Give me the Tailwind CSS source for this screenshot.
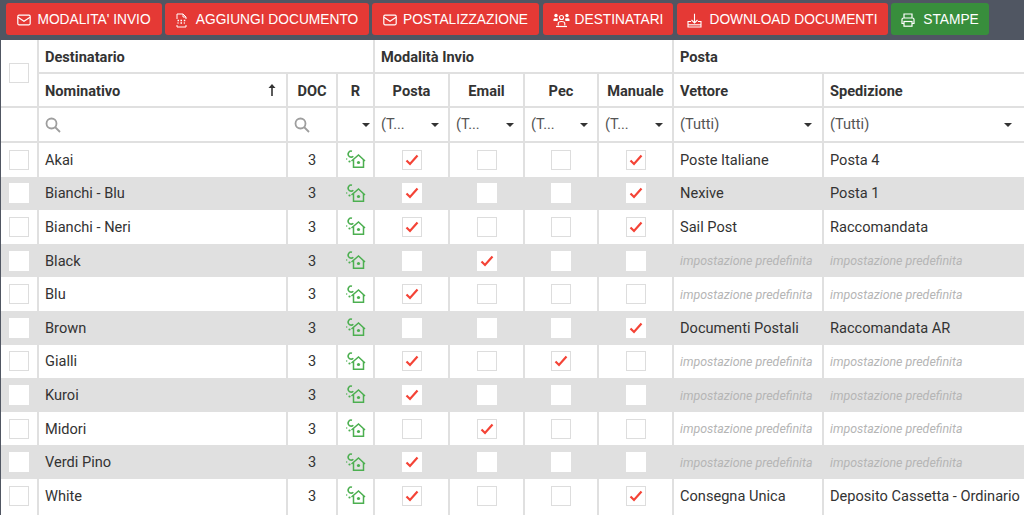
<!DOCTYPE html>
<html lang="it">
<head>
  <meta charset="UTF-8" />
  <title>Destinatari</title>
  <script src="https://cdn.jsdelivr.net/npm/@tailwindcss/browser@4"></script>
</head>
<body class="h-[515px] w-[1024px] overflow-hidden bg-white font-['Roboto',sans-serif] text-[14.6px] text-[#333]">

  <!-- Toolbar -->
  <div class="flex h-[40px] items-start gap-[3px] bg-[#505662] pl-[6px] pt-[3px] font-['Liberation_Sans',sans-serif] text-[13.75px] text-white">
    <button class="flex h-[32px] w-[156px] items-center justify-center gap-[6px] rounded-[3px] bg-[#e53935] pt-[2px]">
      <svg class="h-[14px] w-[14px]" viewBox="0 0 14 14" fill="none" stroke="currentColor" stroke-width="1.2"><rect x="0.8" y="2.2" width="12.4" height="9.6" rx="1.2"/><path d="M1 4.2l6 4 6-4"/></svg>
      MODALITA' INVIO
    </button>
    <button class="flex h-[32px] w-[204px] items-center justify-center gap-[9px] rounded-[3px] bg-[#e53935] pt-[2px]">
      <svg class="h-[15px] w-[11px]" viewBox="0 0 11 15" fill="none" stroke="currentColor" stroke-width="1"><path d="M1 6V1h6l3 3v2M1 12v2h9v-2M7 1v3h3"/><path d="M1.500 7.500h1.500M4.500 7.500h1.500M7.800 7.500h1.500M1.500 10h1M4.500 10h1.500M7.800 10h1" stroke-width="1.400"/></svg>
      AGGIUNGI DOCUMENTO
    </button>
    <button class="flex h-[32px] w-[167px] items-center justify-center gap-[6px] rounded-[3px] bg-[#e53935] pt-[2px]">
      <svg class="h-[14px] w-[14px]" viewBox="0 0 14 14" fill="none" stroke="currentColor" stroke-width="1.2"><rect x="0.8" y="2.2" width="12.4" height="9.6" rx="1.2"/><path d="M1 4.2l6 4 6-4"/></svg>
      POSTALIZZAZIONE
    </button>
    <button class="ml-[1px] flex h-[32px] w-[130px] items-center justify-center gap-[5px] rounded-[3px] bg-[#e53935] pt-[2px]">
      <svg class="h-[15px] w-[17px]" viewBox="0 0 17 15" fill="none" stroke="currentColor"><circle cx="8.500" cy="4.500" r="2" stroke-width="1.100"/><circle cx="3" cy="2.500" r="1.700" fill="currentColor" stroke="none"/><circle cx="14" cy="2.500" r="1.700" fill="currentColor" stroke="none"/><path d="M.5 8V6.500c0-1 1-1.300 2.500-1.300 1 0 1.700.2 2.100.6-.3.600-.5 1.300-.6 2.200zM16.500 8V6.500c0-1-1-1.300-2.500-1.300-1 0-1.700.2-2.100.6.3.600.5 1.300.6 2.200z" fill="currentColor" stroke="none"/><path d="M5.200 12.500v-2c0-1.300 1.400-2 3.300-2s3.300.7 3.300 2v2" stroke-width="1.100"/><path d="M3 13.500h11" stroke-width="1.200"/></svg>
      DESTINATARI
    </button>
    <button class="ml-[1px] flex h-[32px] w-[211px] items-center justify-center gap-[7px] rounded-[3px] bg-[#e53935] pt-[2px]">
      <svg class="h-[15px] w-[15px]" viewBox="0 0 15 15" fill="none" stroke="currentColor" stroke-width="1.100"><path d="M7.500 .8v9M4.500 7l3 3 3-3"/><path d="M4 8.500H1v5.500h13V8.500h-3"/><path d="M1 11.800h13"/></svg>
      DOWNLOAD DOCUMENTI
    </button>
    <button class="flex h-[32px] w-[98px] items-center justify-center gap-[8px] rounded-[3px] bg-[#388e3c] pt-[2px]">
      <svg class="h-[14px] w-[14px]" viewBox="0 0 14 14" fill="none" stroke="currentColor" stroke-width="1.200"><path d="M3 5V1h8v4M3 10.500H1V6.500A1.500 1.500 0 0 1 2.500 5h9A1.500 1.500 0 0 1 13 6.500v4h-2"/><rect x="3" y="8.500" width="8" height="4.700"/></svg>
      STAMPE
    </button>
  </div>

  <!-- Griglia -->
  <div class="border-l border-l-[#505662]">
    <!-- Intestazione -->
    <div class="grid h-[68px] grid-cols-[38px_249px_50px_37px_75px_75px_74px_75px_150px_200px] grid-rows-[34px_32px] border-b-2 border-[#e0e0e0] font-bold">
      <div class="row-span-2 flex items-center justify-center border-r-2 border-[#e0e0e0]">
        <span class="h-[20px] w-[20px] border border-[#ddd] bg-white"></span>
      </div>
      <div class="col-span-3 flex items-center border-b-2 border-r-2 border-[#e0e0e0] pl-[6px] pt-[3px]">Destinatario</div>
      <div class="col-span-4 flex items-center border-b-2 border-r-2 border-[#e0e0e0] pl-[6px] pt-[3px]">Modalità Invio</div>
      <div class="col-span-2 flex items-center border-b-2 border-[#e0e0e0] pl-[6px] pt-[3px]">Posta</div>
      <div class="flex items-center justify-between border-r-2 border-[#e0e0e0] pl-[6px] pr-[9px] pt-[3px]">
        Nominativo
        <svg class="mb-[3px] h-[14px] w-[10px]" viewBox="0 0 10 14" fill="#333"><path d="M5 1L1.500 5h2.700v8h1.600V5h2.700z"/></svg>
      </div>
      <div class="flex items-center justify-center border-r-2 border-[#e0e0e0] pt-[3px]">DOC</div>
      <div class="flex items-center justify-center border-r-2 border-[#e0e0e0] pt-[3px]">R</div>
      <div class="flex items-center justify-center border-r-2 border-[#e0e0e0] pt-[3px]">Posta</div>
      <div class="flex items-center justify-center border-r-2 border-[#e0e0e0] pt-[3px]">Email</div>
      <div class="flex items-center justify-center border-r-2 border-[#e0e0e0] pt-[3px]">Pec</div>
      <div class="flex items-center justify-center border-r-2 border-[#e0e0e0] pt-[3px]">Manuale</div>
      <div class="flex items-center border-r-2 border-[#e0e0e0] pl-[6px] pt-[3px]">Vettore</div>
      <div class="flex items-center pl-[6px] pt-[3px]">Spedizione</div>
    </div>

    <!-- Filtri -->
    <div class="grid h-[35px] grid-cols-[38px_249px_50px_37px_75px_75px_74px_75px_150px_200px] border-b-2 border-[#e0e0e0] text-[#555]">
      <div class="border-r-2 border-[#e0e0e0]"></div>
      <div class="flex items-center border-r-2 border-[#e0e0e0] pl-[6px]">
        <svg class="h-[16px] w-[16px]" viewBox="0 0 16 16" fill="none" stroke="#9e9e9e" stroke-width="1.800"><circle cx="6.500" cy="6.500" r="5"/><path d="M10 10l5 5"/></svg>
      </div>
      <div class="flex items-center border-r-2 border-[#e0e0e0] pl-[6px]">
        <svg class="h-[16px] w-[16px]" viewBox="0 0 16 16" fill="none" stroke="#9e9e9e" stroke-width="1.800"><circle cx="6.500" cy="6.500" r="5"/><path d="M10 10l5 5"/></svg>
      </div>
      <div class="flex items-center justify-end border-r-2 border-[#e0e0e0] pr-[3px]">
        <span class="h-0 w-0 border-x-[4px] border-t-[4px] border-x-transparent border-t-[#333]"></span>
      </div>
      <div class="flex items-center justify-between border-r-2 border-[#e0e0e0] pl-[6px] pr-[9px]">(T...<span class="h-0 w-0 border-x-[4px] border-t-[4px] border-x-transparent border-t-[#333]"></span></div>
      <div class="flex items-center justify-between border-r-2 border-[#e0e0e0] pl-[6px] pr-[9px]">(T...<span class="h-0 w-0 border-x-[4px] border-t-[4px] border-x-transparent border-t-[#333]"></span></div>
      <div class="flex items-center justify-between border-r-2 border-[#e0e0e0] pl-[6px] pr-[9px]">(T...<span class="h-0 w-0 border-x-[4px] border-t-[4px] border-x-transparent border-t-[#333]"></span></div>
      <div class="flex items-center justify-between border-r-2 border-[#e0e0e0] pl-[6px] pr-[9px]">(T...<span class="h-0 w-0 border-x-[4px] border-t-[4px] border-x-transparent border-t-[#333]"></span></div>
      <div class="flex items-center justify-between border-r-2 border-[#e0e0e0] pl-[6px] pr-[10px]">(Tutti)<span class="h-0 w-0 border-x-[4px] border-t-[4px] border-x-transparent border-t-[#333]"></span></div>
      <div class="flex items-center justify-between pl-[6px] pr-[12px]">(Tutti)<span class="h-0 w-0 border-x-[4px] border-t-[4px] border-x-transparent border-t-[#333]"></span></div>
    </div>

    <div id="righe"></div>

    <!-- Inizio della riga successiva, tagliata dal bordo -->
    <div class="grid h-[3px] grid-cols-[38px_249px_50px_37px_75px_75px_74px_75px_150px_200px]">
      <div class="border-r-2 border-[#e0e0e0]"></div>
      <div class="border-r-2 border-[#e0e0e0]"></div>
      <div class="border-r-2 border-[#e0e0e0]"></div>
      <div class="border-r-2 border-[#e0e0e0]"></div>
      <div class="border-r-2 border-[#e0e0e0]"></div>
      <div class="border-r-2 border-[#e0e0e0]"></div>
      <div class="border-r-2 border-[#e0e0e0]"></div>
      <div class="border-r-2 border-[#e0e0e0]"></div>
      <div class="border-r-2 border-[#e0e0e0]"></div>
    </div>
  </div>

  <script>
    // nome, posta, email, pec, manuale, vettore, spedizione
    const righe = [
      ["Akai", 1, 0, 0, 1, "Poste Italiane", "Posta 4"],
      ["Bianchi - Blu", 1, 0, 0, 1, "Nexive", "Posta 1"],
      ["Bianchi - Neri", 1, 0, 0, 1, "Sail Post", "Raccomandata"],
      ["Black", 0, 1, 0, 0, "", ""],
      ["Blu", 1, 0, 0, 0, "", ""],
      ["Brown", 0, 0, 0, 1, "Documenti Postali", "Raccomandata AR"],
      ["Gialli", 1, 0, 1, 0, "", ""],
      ["Kuroi", 1, 0, 0, 0, "", ""],
      ["Midori", 0, 1, 0, 0, "", ""],
      ["Verdi Pino", 1, 0, 0, 0, "", ""],
      ["White", 1, 0, 0, 1, "Consegna Unica", "Deposito Cassetta - Ordinario"],
    ];

    const spunta = `<svg class="h-[12px] w-[14px]" viewBox="0 0 14 12" fill="none" stroke="#f44336" stroke-width="2.200"><path d="M1.500 6.500l3.500 3.500 7.500-8.500"/></svg>`;
    const casa = `<svg class="h-[19px] w-[21px]" viewBox="0 0 21 19" fill="none" stroke="#4caf50" stroke-width="1.500"><path d="M6.500 11L13.500 5l6.500 6"/><path d="M8.500 9.500V17.300h10V9.500"/><circle cx="13.500" cy="12.500" r="1.600" fill="#4caf50" stroke="none"/><path d="M7 1.200a3 3 0 1 0 1.300 5" stroke-width="1.600"/><circle cx="4.500" cy="11.500" r="1.100" fill="#4caf50" stroke="none"/><circle cx="1.700" cy="9" r=".7" fill="#4caf50" stroke="none"/></svg>`;

    const casella = (v, grigia) =>
      `<div class="flex items-center justify-center border-r-2 border-[#e0e0e0]"><span class="flex h-[20px] w-[20px] items-center justify-center bg-white ${grigia ? "" : "border border-[#ddd]"}">${v ? spunta : ""}</span></div>`;

    const testoPosta = (t, extra) =>
      t ? `<div class="flex items-center whitespace-nowrap pt-[2px] ${extra}">${t}</div>`
        : `<div class="flex items-center whitespace-nowrap pt-[2px] text-[12.4px] italic text-[#b5b5b5] ${extra}">impostazione predefinita</div>`;

    document.getElementById("righe").innerHTML = righe.map((r, i) => {
      const grigia = i % 2 === 1;
      return `<div class="grid h-[33.6px] grid-cols-[38px_249px_50px_37px_75px_75px_74px_75px_150px_200px] ${grigia ? "bg-[#e0e0e0]" : "bg-white"}">
        <div class="flex items-center justify-center border-r-2 border-[#e0e0e0]"><span class="h-[20px] w-[20px] bg-white ${grigia ? "" : "border border-[#ddd]"}"></span></div>
        <div class="flex items-center border-r-2 border-[#e0e0e0] pl-[6px] pt-[2px]">${r[0]}</div>
        <div class="flex items-center justify-center border-r-2 border-[#e0e0e0] pt-[2px]">3</div>
        <div class="flex items-center justify-center border-r-2 border-[#e0e0e0] pr-[1px]">${casa}</div>
        ${casella(r[1], grigia)}${casella(r[2], grigia)}${casella(r[3], grigia)}${casella(r[4], grigia)}
        ${testoPosta(r[5], "border-r-2 border-[#e0e0e0] pl-[6px]")}
        ${testoPosta(r[6], "pl-[6px]")}
      </div>`;
    }).join("");
  </script>
</body>
</html>
